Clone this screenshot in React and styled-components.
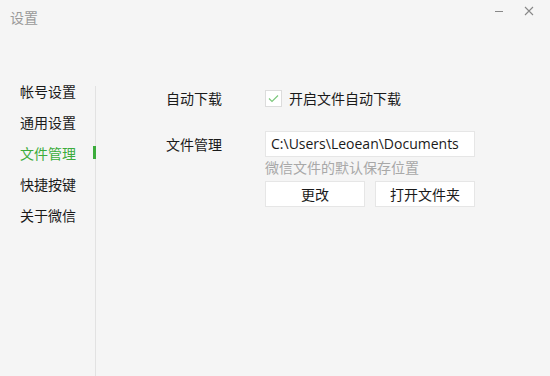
import React from 'react';
import styled, { createGlobalStyle } from 'styled-components';

const Global = createGlobalStyle`
  html, body { margin: 0; padding: 0; }
  body {
    background: #f5f5f5;
    font-family: "Noto Sans CJK SC", "Noto Sans", sans-serif;
    color: #1a1a1a;
  }
`;

const Window = styled.div`
  width: 550px;
  height: 376px;
  background: #f5f5f5;
  display: flex;
  flex-direction: column;
  overflow: hidden;
`;

const TitleBar = styled.div`
  height: 34px;
  display: flex;
  align-items: flex-start;
  justify-content: space-between;
`;

const Title = styled.div`
  font-size: 14px;
  color: #9a9a9a;
  padding: 7px 0 0 10px;
  line-height: 20px;
`;

const Controls = styled.div`
  display: flex;
  gap: 16px;
  padding: 4px 14px 0 0;
`;

const CtrlBtn = styled.div`
  width: 14px;
  height: 14px;
  display: flex;
  align-items: center;
  justify-content: center;
`;

const Body = styled.div`
  flex: 1;
  display: flex;
  padding-top: 47px;
`;

const Sidebar = styled.div`
  position: relative;
  width: 96px;
  display: flex;
  flex-direction: column;
  gap: 11px;

  &::before {
    content: '';
    position: absolute;
    right: 0;
    top: 5px;
    bottom: 0;
    width: 1px;
    background: #e2e2e2;
  }
`;

const NavItem = styled.div`
  position: relative;
  padding-left: 20px;
  font-size: 14px;
  line-height: 20px;
  color: ${p => (p.$active ? '#3cac3c' : '#1a1a1a')};

  &::after {
    content: '';
    display: ${p => (p.$active ? 'block' : 'none')};
    position: absolute;
    right: 0;
    top: 3px;
    width: 3px;
    height: 13px;
    background: #3cac3c;
  }
`;

const Content = styled.div`
  flex: 1;
  padding: 7px 0 0 70px;
  display: flex;
  flex-direction: column;
  gap: 23px;
`;

const Row = styled.div`
  display: flex;
  align-items: flex-start;
`;

const Label = styled.div`
  width: 99px;
  font-size: 14px;
  line-height: 20px;
  color: #1a1a1a;
  padding-top: ${p => p.$offset || 0}px;
`;

const CheckWrap = styled.label`
  display: flex;
  align-items: center;
  gap: 7px;
  font-size: 14px;
  line-height: 20px;
`;

const Box = styled.span`
  width: 15px;
  height: 15px;
  border: 1px solid #dcdcdc;
  background: #fff;
  display: flex;
  align-items: center;
  justify-content: center;
`;

const Field = styled.div`
  display: flex;
  flex-direction: column;
  width: 210px;
`;

const PathBox = styled.div`
  height: 24px;
  border: 1px solid #e6e6e6;
  background: #fff;
  font-family: "Open Sans", "Noto Sans", sans-serif;
  font-size: 14px;
  line-height: 24px;
  padding-left: 5px;
  color: #1a1a1a;
  white-space: nowrap;
  overflow: hidden;
`;

const Hint = styled.div`
  font-size: 14px;
  color: #a8a8a8;
  line-height: 20px;
`;

const Buttons = styled.div`
  display: flex;
  justify-content: space-between;
  margin-top: 4px;
`;

const Button = styled.div`
  width: 98px;
  height: 24px;
  border: 1px solid #e6e6e6;
  background: #fff;
  font-size: 14px;
  line-height: 24px;
  text-align: center;
  color: #1a1a1a;
`;

const nav = ['帐号设置', '通用设置', '文件管理', '快捷按键', '关于微信'];

export default function App() {
  return (
    <Window>
      <Global />
      <TitleBar>
        <Title>设置</Title>
        <Controls>
          <CtrlBtn>
            <svg width="10" height="10" viewBox="0 0 10 10">
              <path d="M1 5.5h8" stroke="#888" strokeWidth="1" />
            </svg>
          </CtrlBtn>
          <CtrlBtn>
            <svg width="10" height="10" viewBox="0 0 10 10">
              <path d="M1 1l8 8M9 1l-8 8" stroke="#888" strokeWidth="1.1" />
            </svg>
          </CtrlBtn>
        </Controls>
      </TitleBar>
      <Body>
        <Sidebar>
          {nav.map(n => (
            <NavItem key={n} $active={n === '文件管理'}>{n}</NavItem>
          ))}
        </Sidebar>
        <Content>
          <Row>
            <Label>自动下载</Label>
            <CheckWrap>
              <Box>
                <svg width="11" height="9" viewBox="0 0 11 9">
                  <path d="M1 4.5l3 3 6-6" fill="none" stroke="#7cc87c" strokeWidth="1.2" />
                </svg>
              </Box>
              开启文件自动下载
            </CheckWrap>
          </Row>
          <Row>
            <Label $offset={3}>文件管理</Label>
            <Field>
              <PathBox>C:\Users\Leoean\Documents</PathBox>
              <Hint>微信文件的默认保存位置</Hint>
              <Buttons>
                <Button>更改</Button>
                <Button>打开文件夹</Button>
              </Buttons>
            </Field>
          </Row>
        </Content>
      </Body>
    </Window>
  );
}
